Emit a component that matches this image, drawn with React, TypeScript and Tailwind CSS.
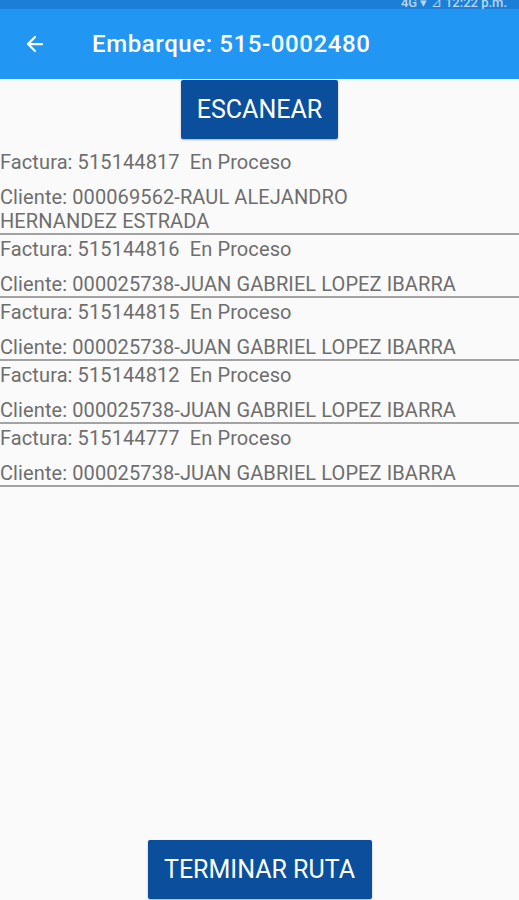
import { ArrowLeft } from "lucide-react";

const facturas = [
  { id: "515144817", cliente: "000069562-RAUL ALEJANDRO HERNANDEZ ESTRADA" },
  { id: "515144816", cliente: "000025738-JUAN GABRIEL LOPEZ IBARRA" },
  { id: "515144815", cliente: "000025738-JUAN GABRIEL LOPEZ IBARRA" },
  { id: "515144812", cliente: "000025738-JUAN GABRIEL LOPEZ IBARRA" },
  { id: "515144777", cliente: "000025738-JUAN GABRIEL LOPEZ IBARRA" },
];

export default function App() {
  return (
    <div className="flex h-[900px] w-[519px] flex-col overflow-hidden bg-[#fafafa] font-['Roboto',sans-serif]">
      {/* status bar, mostly cut off */}
      <div className="flex h-[9px] items-end justify-end overflow-hidden bg-[#1b7fd8] pr-3">
        <span className="text-[13px] font-medium leading-[13px] text-white/70">4G ▾ ⊿ 12:22 p.m.</span>
      </div>

      <header className="flex h-[70px] items-center bg-[#2196f3] text-white">
        <button type="button" aria-label="Volver" className="ml-[23px] flex h-6 w-6 items-center justify-center">
          <ArrowLeft size={24} strokeWidth={2.25} />
        </button>
        <h1 className="ml-[45px] text-[24px] font-medium tracking-[0.6px]">Embarque: 515-0002480</h1>
      </header>

      <div className="flex justify-center pt-px">
        <button
          type="button"
          className="h-[59px] w-[157px] rounded-[2px] bg-[#0b4f9c] text-[25px] text-white shadow-[0_1px_2px_rgba(0,0,0,0.3)]"
        >
          ESCANEAR
        </button>
      </div>

      <ul className="mt-[9px] text-[20px] tracking-[0.1px] text-[#6e6e6e]">
        {facturas.map((f) => (
          <li key={f.id} className="border-b-2 border-[#a3a3a3]">
            <p className="h-[28px] whitespace-pre leading-[28px]">{`Factura: ${f.id}  En Proceso`}</p>
            <p className="mt-[9px] w-[462px] leading-[24px]">Cliente: {f.cliente}</p>
          </li>
        ))}
      </ul>

      <div className="flex-1" />

      <div className="flex justify-center pb-px">
        <button
          type="button"
          className="h-[59px] w-[224px] rounded-[2px] bg-[#0b4f9c] text-[25px] text-white shadow-[0_1px_2px_rgba(0,0,0,0.3)]"
        >
          TERMINAR RUTA
        </button>
      </div>
    </div>
  );
}
